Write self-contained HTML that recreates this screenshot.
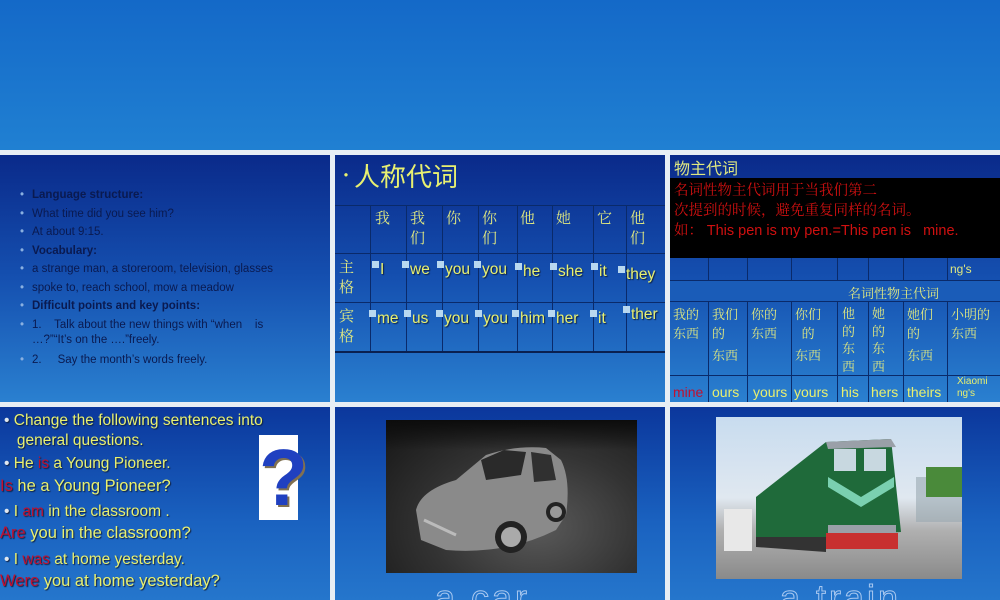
<!DOCTYPE html>
<html style="width:1000px;height:600px;overflow:hidden"><head><meta charset="utf-8"><style>
*{margin:0;padding:0;box-sizing:border-box}
body{width:1000px;height:600px;overflow:hidden;background:#e8eef4;position:relative;font-family:"Liberation Sans","Noto Sans CJK SC",sans-serif}
.a{position:absolute}
.top{left:0;top:0;width:1000px;height:150px;background:linear-gradient(#1469c8,#2080d2)}
.p{background:linear-gradient(#0a2a8a 0%,#1550b0 50%,#2a80d0 100%)}
.p2{background:linear-gradient(#0b379c 0%,#1a62c0 60%,#2576cc 100%);overflow:hidden}
.l1{font-size:11.5px;color:#0a1a50;line-height:18.5px}
.l1 div{position:relative;padding-left:12px}
.l1 div:before{content:"•";position:absolute;left:0;color:#8ab0e0}
.y{color:#e8f070;text-shadow:1px 1px 1px #102040}
.cj{font-family:"Noto Serif CJK SC","Noto Sans CJK SC",serif;color:#e0e880}
.vl{position:absolute;width:1px;background:#0a2a6a}
.hl{position:absolute;height:1px;background:#0a2a6a}
.sq{display:inline-block;width:7px;height:7px;background:#b8d8f0;margin-right:1px;vertical-align:6px}
.r{color:#c01030}
</style></head><body>
<div class="a top"></div>

<!-- panel 1 -->
<div class="a p" style="left:0;top:155px;width:330px;height:247px"></div>
<div class="a l1" style="left:20px;top:186px;width:305px">
<div><b>Language structure:</b></div>
<div>What time did you see him?</div>
<div>At about 9:15.</div>
<div><b>Vocabulary:</b></div>
<div>a strange man, a storeroom, television, glasses</div>
<div>spoke to, reach school, mow a meadow</div>
<div><b>Difficult points and key points:</b></div>
<div style="line-height:15px;margin:2px 0 3px">1.&nbsp;&nbsp;&nbsp; Talk about the new things with “when &nbsp;&nbsp;&nbsp;is<br>…?”“It’s on the ….”freely.</div>
<div>2.&nbsp;&nbsp;&nbsp;&nbsp; Say the month’s words freely.</div>
</div>

<!-- panel 2 -->
<div class="a p" style="left:335px;top:155px;width:330px;height:247px"></div>
<div class="a cj" style="left:338px;top:157px;font-size:26px;font-family:'Noto Sans CJK SC',sans-serif;color:#e8f070"><span style="font-size:16px;vertical-align:5px">•</span>人称代词</div>
<div class="hl" style="left:335px;top:205px;width:330px"></div>
<div class="hl" style="left:335px;top:253px;width:330px"></div>
<div class="hl" style="left:335px;top:302px;width:330px"></div>
<div class="hl" style="left:335px;top:351px;width:330px;background:#0a2050;height:2px"></div>
<div class="vl" style="left:370px;top:205px;height:146px"></div>
<div class="vl" style="left:406px;top:205px;height:146px"></div>
<div class="vl" style="left:442px;top:205px;height:146px"></div>
<div class="vl" style="left:478px;top:205px;height:146px"></div>
<div class="vl" style="left:517px;top:205px;height:146px"></div>
<div class="vl" style="left:552px;top:205px;height:146px"></div>
<div class="vl" style="left:593px;top:205px;height:146px"></div>
<div class="vl" style="left:626px;top:205px;height:146px"></div>
<div class="a cj" style="font-size:15px;line-height:20px;top:208px;left:375px">我</div>
<div class="a cj" style="font-size:15px;line-height:20px;top:208px;left:410px">我<br>们</div>
<div class="a cj" style="font-size:15px;line-height:20px;top:208px;left:446px">你</div>
<div class="a cj" style="font-size:15px;line-height:20px;top:208px;left:482px">你<br>们</div>
<div class="a cj" style="font-size:15px;line-height:20px;top:208px;left:520px">他</div>
<div class="a cj" style="font-size:15px;line-height:20px;top:208px;left:556px">她</div>
<div class="a cj" style="font-size:15px;line-height:20px;top:208px;left:597px">它</div>
<div class="a cj" style="font-size:15px;line-height:20px;top:208px;left:630px">他<br>们</div>
<div class="a cj" style="font-size:15px;line-height:20px;top:257px;left:339px">主<br>格</div>
<div class="a cj" style="font-size:15px;line-height:20px;top:306px;left:339px">宾<br>格</div>
<div class="a y" style="font-size:15.5px;top:261px;left:372px;white-space:nowrap">
<span class="a" style="left:0"><span class="sq"></span>I</span>
<span class="a" style="left:30px"><span class="sq"></span>we</span>
<span class="a" style="left:65px"><span class="sq"></span>you</span>
<span class="a" style="left:102px"><span class="sq"></span>you</span>
<span class="a" style="left:143px;top:2px"><span class="sq"></span>he</span>
<span class="a" style="left:178px;top:2px"><span class="sq"></span>she</span>
<span class="a" style="left:219px;top:2px"><span class="sq"></span>it</span>
<span class="a" style="left:246px;top:5px"><span class="sq"></span>they</span>
</div>
<div class="a y" style="font-size:15.5px;top:310px;left:369px;white-space:nowrap">
<span class="a" style="left:0"><span class="sq"></span>me</span>
<span class="a" style="left:35px"><span class="sq"></span>us</span>
<span class="a" style="left:67px"><span class="sq"></span>you</span>
<span class="a" style="left:106px"><span class="sq"></span>you</span>
<span class="a" style="left:143px"><span class="sq"></span>him</span>
<span class="a" style="left:179px"><span class="sq"></span>her</span>
<span class="a" style="left:221px"><span class="sq"></span>it</span>
<span class="a" style="left:254px;top:-4px"><span class="sq"></span>ther</span>
</div>

<!-- panel 3 -->
<div class="a p" style="left:670px;top:155px;width:330px;height:247px"></div>
<div class="a cj" style="left:674px;top:156px;font-size:16px;line-height:22px;font-family:'Noto Sans CJK SC',sans-serif">物主代词</div>
<div class="hl" style="left:670px;top:280px;width:330px"></div>
<div class="hl" style="left:670px;top:301px;width:330px"></div>
<div class="hl" style="left:670px;top:375px;width:330px"></div>
<div class="vl" style="left:708px;top:258px;height:144px"></div>
<div class="vl" style="left:747px;top:258px;height:144px"></div>
<div class="vl" style="left:791px;top:258px;height:144px"></div>
<div class="vl" style="left:837px;top:258px;height:144px"></div>
<div class="vl" style="left:868px;top:258px;height:144px"></div>
<div class="vl" style="left:903px;top:258px;height:144px"></div>
<div class="vl" style="left:947px;top:258px;height:144px"></div>
<div class="a" style="left:670px;top:281px;width:330px;height:20px;background:#1a5cb8"></div>
<div class="a cj" style="left:950px;top:262px;font-family:'Liberation Sans';font-size:12px">ng's</div>
<div class="a cj" style="left:848px;top:283px;font-size:13px">名词性物主代词</div>
<div class="a cj" style="font-size:13px;line-height:19px;top:304px;left:673px">我的<br>东西</div>
<div class="a cj" style="font-size:13px;line-height:19px;top:304px;left:712px">我们<br>的<br><span style="line-height:26px">东西</span></div>
<div class="a cj" style="font-size:13px;line-height:19px;top:304px;left:751px">你的<br>东西</div>
<div class="a cj" style="font-size:13px;line-height:19px;top:304px;left:795px">你们<br>&nbsp;&nbsp;的<br><span style="line-height:26px">东西</span></div>
<div class="a cj" style="font-size:13px;line-height:17.5px;top:304px;left:842px">他<br>的<br>东<br>西</div>
<div class="a cj" style="font-size:13px;line-height:17.5px;top:304px;left:872px">她<br>的<br>东<br>西</div>
<div class="a cj" style="font-size:13px;line-height:19px;top:304px;left:907px">她们<br>的<br><span style="line-height:26px">东西</span></div>
<div class="a cj" style="font-size:13px;line-height:19px;top:304px;left:951px">小明的<br>东西</div>
<div class="a y" style="font-size:14px;top:384px;left:673px;text-shadow:none"><span class="r">mine</span></div>
<div class="a y" style="font-size:14px;top:384px;left:712px;text-shadow:none">ours</div>
<div class="a y" style="font-size:14px;top:384px;left:753px;text-shadow:none">yours</div>
<div class="a y" style="font-size:14px;top:384px;left:794px;text-shadow:none">yours</div>
<div class="a y" style="font-size:14px;top:384px;left:841px;text-shadow:none">his</div>
<div class="a y" style="font-size:14px;top:384px;left:871px;text-shadow:none">hers</div>
<div class="a y" style="font-size:14px;top:384px;left:907px;text-shadow:none">theirs</div>
<div class="a y" style="font-size:10px;line-height:12px;top:376px;left:957px;text-shadow:none">Xiaomi<br>ng's</div>
<div class="a" style="left:670px;top:178px;width:330px;height:80px;background:#000"></div>
<div class="a" style="left:674px;top:180px;font-size:14.5px;line-height:20px;color:#d01010;font-family:'Noto Serif CJK SC',serif">名词性物主代词用于当我们第二<br>次提到的时候，避免重复同样的名词。<br>如：&nbsp;<span style="font-family:'Liberation Sans'">This pen is my pen.=This pen is &nbsp;&nbsp;mine.</span></div>

<!-- panel 4 -->
<div class="a p2" style="left:0;top:407px;width:330px;height:193px"></div>
<div class="a y" style="left:4px;top:411px;font-size:15.5px;line-height:20px;width:290px"><span style="color:#e0e8f0">•</span> Change the following sentences into<br>&nbsp;&nbsp;&nbsp;general questions.</div>
<div class="a y" style="left:4px;top:455px;font-size:15.5px"><span style="color:#e0e8f0">•</span> He <span class="r">is</span> a Young Pioneer.</div>
<div class="a y" style="left:0;top:477px;font-size:16.5px"><span class="r">Is</span> he a Young Pioneer?</div>
<div class="a y" style="left:4px;top:503px;font-size:15.5px"><span style="color:#e0e8f0">•</span> I <span class="r">am</span> in the classroom .</div>
<div class="a y" style="left:0;top:524px;font-size:16.5px"><span class="r">Are</span> you in the classroom?</div>
<div class="a y" style="left:4px;top:551px;font-size:15.5px"><span style="color:#e0e8f0">•</span> I <span class="r">was</span> at home yesterday.</div>
<div class="a y" style="left:0;top:572px;font-size:16.5px"><span class="r">Were</span> you at home yesterday?</div>
<div class="a" style="left:259px;top:435px;width:39px;height:85px;background:#fff"></div>
<div class="a" style="left:259px;top:435px;width:39px;text-align:center;font-size:80px;font-weight:bold;color:#2040c0;line-height:85px;text-shadow:2px 2px 0 #807050">?</div>

<!-- panel 5 -->
<div class="a p2" style="left:335px;top:407px;width:330px;height:193px">
<div class="a" style="left:100px;top:170px;font-size:36px;color:transparent;-webkit-text-stroke:1px #a8c8f0;letter-spacing:3px">a car</div>
</div>
<div class="a" style="left:386px;top:420px;width:251px;height:153px;background:radial-gradient(ellipse at 60% 70%,#5a5a5a 0%,#333 50%,#151515 100%)"></div>
<div class="a" style="left:386px;top:420px;width:251px;height:30px;background:linear-gradient(#0c0c0c,rgba(20,20,20,0))"></div>
<svg class="a" style="left:386px;top:420px" width="251" height="153">
<path d="M30 90 Q35 70 70 60 L100 35 Q130 25 160 28 L175 40 Q185 60 180 95 L170 110 Q120 135 60 130 L35 120 Z" fill="#8a8a8a"/>
<path d="M95 40 L118 30 L140 32 L135 55 L100 60 Z" fill="#2a2a2a"/>
<path d="M145 32 L165 35 L170 60 L148 62 Z" fill="#303030"/>
<circle cx="125" cy="117" r="16" fill="#222"/><circle cx="125" cy="117" r="10" fill="#aaa"/>
<circle cx="170" cy="92" r="10" fill="#222"/><circle cx="170" cy="92" r="6" fill="#999"/>
<path d="M38 100 L70 115" stroke="#bbb" stroke-width="3"/>
</svg>

<!-- panel 6 -->
<div class="a p2" style="left:670px;top:407px;width:330px;height:193px">
<div class="a" style="left:110px;top:170px;font-size:36px;color:transparent;-webkit-text-stroke:1px #a8c8f0;letter-spacing:3px">a train</div>
</div>
<div class="a" style="left:716px;top:417px;width:246px;height:162px;background:linear-gradient(#c8dcef 0%,#e0e8f0 50%,#b0b0b0 70%,#8a8a8a 100%)"></div>
<svg class="a" style="left:716px;top:417px" width="246" height="162">
<rect x="8" y="92" width="28" height="42" fill="#e8e8e8"/>
<path d="M40 80 L110 25 L175 22 L185 115 L110 120 L40 120 Z" fill="#1f6a3a"/>
<path d="M110 25 L175 22 L180 30 L112 32 Z" fill="#9aa0a8"/>
<rect x="118" y="32" width="22" height="22" fill="#c8d8e0"/>
<rect x="148" y="32" width="22" height="22" fill="#c8d8e0"/>
<path d="M112 60 L145 80 L178 60 L178 70 L145 90 L112 70 Z" fill="#7ad0b0"/>
<rect x="112" y="108" width="68" height="8" fill="#9aa0a8"/>
<rect x="110" y="116" width="72" height="16" fill="#c83030"/>
<path d="M40 120 L110 120 L110 135 L40 130 Z" fill="#333"/>
<rect x="200" y="60" width="46" height="45" fill="#9aa8b0" opacity=".6"/>
<rect x="210" y="50" width="36" height="30" fill="#4a8a3a"/>
</svg>
</body></html>
